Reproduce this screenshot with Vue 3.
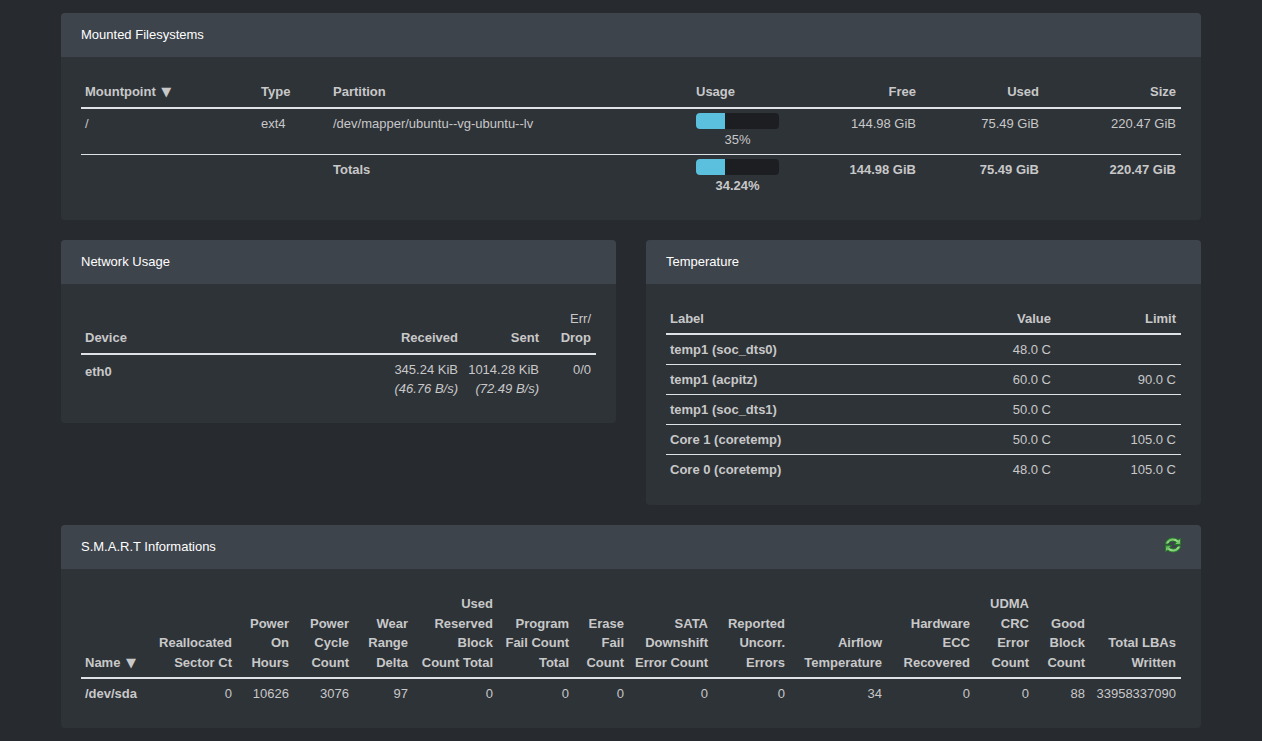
<script setup>
const filesystems = [
  { mount: '/', type: 'ext4', partition: '/dev/mapper/ubuntu--vg-ubuntu--lv', usage: 35, free: '144.98 GiB', used: '75.49 GiB', size: '220.47 GiB' }
]
const totals = { usage: 34.24, free: '144.98 GiB', used: '75.49 GiB', size: '220.47 GiB' }

const devices = [
  { name: 'eth0', received: '345.24 KiB', receivedRate: '(46.76 B/s)', sent: '1014.28 KiB', sentRate: '(72.49 B/s)', errors: '0/0' }
]

const temperatures = [
  { label: 'temp1 (soc_dts0)', value: '48.0 C', limit: '' },
  { label: 'temp1 (acpitz)', value: '60.0 C', limit: '90.0 C' },
  { label: 'temp1 (soc_dts1)', value: '50.0 C', limit: '' },
  { label: 'Core 1 (coretemp)', value: '50.0 C', limit: '105.0 C' },
  { label: 'Core 0 (coretemp)', value: '48.0 C', limit: '105.0 C' }
]

const attributes = [
  { title: 'Reallocated\nSector Ct', value: '0' },
  { title: 'Power\nOn\nHours', value: '10626' },
  { title: 'Power\nCycle\nCount', value: '3076' },
  { title: 'Wear\nRange\nDelta', value: '97' },
  { title: 'Used\nReserved\nBlock\nCount Total', value: '0' },
  { title: 'Program\nFail Count\nTotal', value: '0' },
  { title: 'Erase\nFail\nCount', value: '0' },
  { title: 'SATA\nDownshift\nError Count', value: '0' },
  { title: 'Reported\nUncorr.\nErrors', value: '0' },
  { title: 'Airflow\nTemperature', value: '34' },
  { title: 'Hardware\nECC\nRecovered', value: '0' },
  { title: 'UDMA\nCRC\nError\nCount', value: '0' },
  { title: 'Good\nBlock\nCount', value: '88' },
  { title: 'Total LBAs\nWritten', value: '33958337090' }
]
</script>

<template>
  <main class="page">
    <section class="card">
      <header class="card-header"><h2>Mounted Filesystems</h2></header>
      <div class="card-body">
        <table class="filesystems">
          <colgroup>
            <col class="mount" /><col class="type" /><col class="partition" /><col class="usage" />
            <col class="free" /><col class="used" /><col class="size" />
          </colgroup>
          <thead>
            <tr>
              <th><button type="button" class="sort">Mountpoint <span class="arrow">▼</span></button></th>
              <th>Type</th>
              <th>Partition</th>
              <th>Usage</th>
              <th class="num">Free</th>
              <th class="num">Used</th>
              <th class="num">Size</th>
            </tr>
          </thead>
          <tbody>
            <tr v-for="fs in filesystems" :key="fs.mount">
              <td>{{ fs.mount }}</td>
              <td>{{ fs.type }}</td>
              <td>{{ fs.partition }}</td>
              <td class="meter">
                <div class="progress"><div class="bar" :style="{ width: Math.ceil(fs.usage) + '%' }"></div></div>
                <div class="percent">{{ fs.usage }}%</div>
              </td>
              <td class="num">{{ fs.free }}</td>
              <td class="num">{{ fs.used }}</td>
              <td class="num">{{ fs.size }}</td>
            </tr>
          </tbody>
          <tfoot>
            <tr>
              <td></td>
              <td></td>
              <td>Totals</td>
              <td class="meter">
                <div class="progress"><div class="bar" :style="{ width: Math.ceil(totals.usage) + '%' }"></div></div>
                <div class="percent">{{ totals.usage }}%</div>
              </td>
              <td class="num">{{ totals.free }}</td>
              <td class="num">{{ totals.used }}</td>
              <td class="num">{{ totals.size }}</td>
            </tr>
          </tfoot>
        </table>
      </div>
    </section>

    <div class="columns">
      <section class="card">
        <header class="card-header"><h2>Network Usage</h2></header>
        <div class="card-body">
          <table class="network">
            <colgroup><col class="device" /><col class="received" /><col class="sent" /><col class="errors" /></colgroup>
            <thead>
              <tr>
                <th>Device</th>
                <th class="num">Received</th>
                <th class="num">Sent</th>
                <th class="num"><span class="light">Err/</span><br />Drop</th>
              </tr>
            </thead>
            <tbody>
              <tr v-for="d in devices" :key="d.name">
                <th scope="row" class="device-name">{{ d.name }}</th>
                <td class="num">{{ d.received }}<br /><i>{{ d.receivedRate }}</i></td>
                <td class="num">{{ d.sent }}<br /><i>{{ d.sentRate }}</i></td>
                <td class="num">{{ d.errors }}</td>
              </tr>
            </tbody>
          </table>
        </div>
      </section>

      <section class="card">
        <header class="card-header"><h2>Temperature</h2></header>
        <div class="card-body">
          <table class="temperature">
            <colgroup><col class="label" /><col class="value" /><col class="limit" /></colgroup>
            <thead>
              <tr>
                <th>Label</th>
                <th class="num">Value</th>
                <th class="num">Limit</th>
              </tr>
            </thead>
            <tbody>
              <tr v-for="t in temperatures" :key="t.label">
                <th scope="row">{{ t.label }}</th>
                <td class="num">{{ t.value }}</td>
                <td class="num">{{ t.limit }}</td>
              </tr>
            </tbody>
          </table>
        </div>
      </section>
    </div>

    <section class="card">
      <header class="card-header">
        <h2>S.M.A.R.T Informations</h2>
        <button type="button" class="refresh" aria-label="Refresh">
          <svg width="16" height="16" viewBox="0 0 16 16" aria-hidden="true">
            <defs>
              <linearGradient id="leaf" x1="0" y1="0" x2="1" y2="1">
                <stop offset="0" stop-color="#3a9a3a" />
                <stop offset="0.5" stop-color="#a0dd90" />
                <stop offset="1" stop-color="#58b550" />
              </linearGradient>
            </defs>
            <g fill="url(#leaf)" stroke="#237d26" stroke-linejoin="round">
              <path d="M0.500 7C1 3.400 4.100 1 7.800 1c2.100 0 4 .8 5.300 2.100L15.500 1.500v6H9.300l2.100-2.100C10.500 4.500 9.300 4 7.800 4c-2.200 0-3.800 1.100-4.500 3z" />
              <path d="M15.500 9c-.5 3.600-3.600 6-7.300 6-2.100 0-4-.8-5.300-2.100L.5 14.500v-6h6.200l-2.100 2.100c.9.9 2.100 1.400 3.600 1.400 2.200 0 3.800-1.100 4.500-3z" />
            </g>
          </svg>
        </button>
      </header>
      <div class="card-body">
        <table class="smart">
          <colgroup><col v-for="n in attributes.length + 1" :key="n" /></colgroup>
          <thead>
            <tr>
              <th><button type="button" class="sort">Name <span class="arrow">▼</span></button></th>
              <th v-for="a in attributes" :key="a.title" class="num">{{ a.title }}</th>
            </tr>
          </thead>
          <tbody>
            <tr>
              <th scope="row">/dev/sda</th>
              <td v-for="a in attributes" :key="a.title" class="num">{{ a.value }}</td>
            </tr>
          </tbody>
        </table>
      </div>
    </section>
  </main>
</template>

<style>
body {
  margin: 0;
  background: #272b30;
}
</style>

<style scoped>
.page {
  box-sizing: border-box;
  max-width: 1170px;
  margin: 0 auto;
  padding: 13px 15px;
  display: flex;
  flex-direction: column;
  gap: 20px;
  color: #c8c8c8;
  font: 13px/1.5 "Liberation Sans", Arial, sans-serif;
}
.columns {
  display: grid;
  grid-template-columns: 1fr 1fr;
  gap: 30px;
  align-items: start;
}
.card {
  min-width: 0;
  background: #2e3338;
  border-radius: 4px;
  overflow: hidden;
}
.card-header {
  display: flex;
  align-items: center;
  justify-content: space-between;
  height: 44px;
  padding: 0 20px;
  background: #3e444c;
}
h2 {
  margin: 0;
  color: #fff;
  font-size: 13px;
  font-weight: 400;
}
.card-body {
  padding: 20px;
}
table {
  width: 100%;
  table-layout: fixed;
  border-collapse: separate;
  border-spacing: 0;
}
th,
td {
  padding: 5px 5px 5px 4px;
  text-align: left;
  vertical-align: top;
  white-space: pre;
}
thead th {
  vertical-align: bottom;
  border-bottom: 2px solid #dee2e6;
}
tbody,
tfoot {
  line-height: 19px;
}
tfoot td {
  border-top: 1px solid #dee2e6;
}
.temperature tbody tr > * {
  border-bottom: 1px solid #dee2e6;
}
.temperature tbody tr:last-child > * {
  border-bottom-color: transparent;
}
tfoot {
  font-weight: 700;
}
.num {
  text-align: right;
}
.light {
  font-weight: 400;
}
.sort,
.refresh {
  display: block;
  margin: 0;
  padding: 0;
  border: 0;
  background: none;
  color: inherit;
  font: inherit;
  cursor: pointer;
}
.arrow {
  margin-left: 2px;
  font-family: "DejaVu Sans", sans-serif;
  font-weight: 400;
  line-height: 1;
}
.refresh svg {
  display: block;
}
.card-header .refresh {
  padding-bottom: 4px;
}
.meter {
  padding-top: 4px;
}
.progress {
  height: 16px;
  margin-bottom: 1px;
  border-radius: 4px;
  background: #1c1e22;
  overflow: hidden;
}
.bar {
  height: 100%;
  background: #5bc0de;
}
.percent {
  text-align: center;
}
.device-name {
  padding-top: 7px;
}

.mount { width: 176px; }
.type { width: 72px; }
.partition { width: 363px; }
.usage { width: 92px; }
.free { width: 137px; }
.used { width: 123px; }
.size { width: 137px; }

.device { width: 300px; }
.received { width: 82px; }
.sent { width: 81px; }
.errors { width: 52px; }

.label { width: 264px; }
.value { width: 126px; }
.limit { width: 125px; }

.smart col:nth-child(1) { width: 70px; }
.smart col:nth-child(2) { width: 86px; }
.smart col:nth-child(3) { width: 57px; }
.smart col:nth-child(4) { width: 60px; }
.smart col:nth-child(5) { width: 59px; }
.smart col:nth-child(6) { width: 85px; }
.smart col:nth-child(7) { width: 76px; }
.smart col:nth-child(8) { width: 55px; }
.smart col:nth-child(9) { width: 84px; }
.smart col:nth-child(10) { width: 77px; }
.smart col:nth-child(11) { width: 97px; }
.smart col:nth-child(12) { width: 88px; }
.smart col:nth-child(13) { width: 59px; }
.smart col:nth-child(14) { width: 56px; }
.smart col:nth-child(15) { width: 91px; }
</style>
